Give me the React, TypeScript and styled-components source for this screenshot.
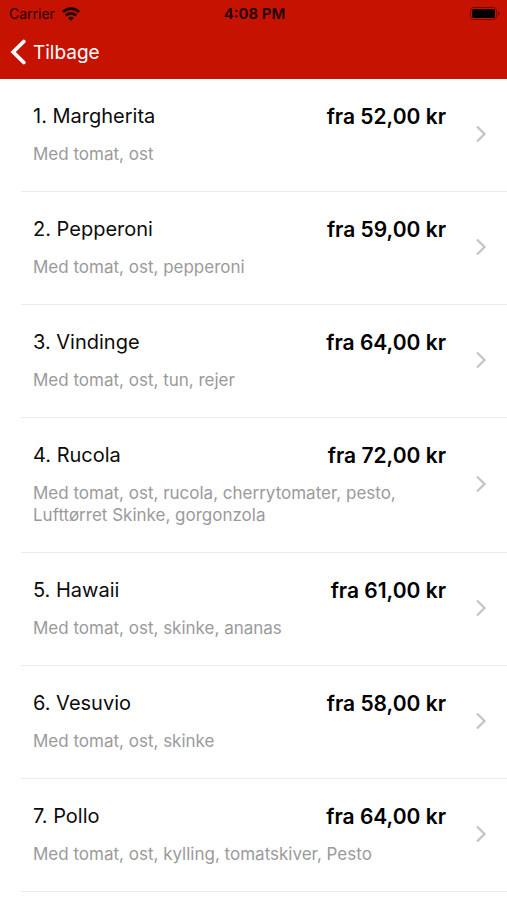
import React from "react";
import styled, { createGlobalStyle } from "styled-components";

const GlobalStyle = createGlobalStyle`
  * { box-sizing: border-box; }
  body { margin: 0; background: #fff; font-family: Inter, "Liberation Sans", sans-serif; color: #0c0c0c; }
`;

const Page = styled.main`
  min-height: 100vh;
  background: #fff;
`;

const Header = styled.header`
  background: #c61200;
  padding-bottom: 2px;
`;

const StatusBar = styled.div`
  display: grid;
  grid-template-columns: 1fr auto 1fr;
  align-items: center;
  height: 27px;
  padding: 0 7px 0 9px;
  font-size: 14px;
  color: #1c0200;
`;

const Carrier = styled.span`
  display: flex;
  align-items: center;
  gap: 7px;
`;

const Time = styled.time`
  font-size: 15px;
  font-weight: 600;
`;

const BatteryIcon = styled.svg`
  justify-self: end;
`;

const BackButton = styled.button`
  display: flex;
  align-items: center;
  gap: 7px;
  height: 50px;
  padding: 0 10px;
  border: 0;
  background: none;
  color: #fff;
  font: inherit;
  font-size: 19px;
  cursor: pointer;
`;

const MenuList = styled.ul`
  list-style: none;
  margin: 0;
  padding: 0 0 0 21px;
`;

const MenuItem = styled.li`
  border-bottom: 1px solid #ebebec;
`;

const ItemButton = styled.button`
  display: flex;
  align-items: center;
  width: 100%;
  padding: 23px 20px 26px 12px;
  border: 0;
  background: none;
  color: inherit;
  font: inherit;
  text-align: left;
  cursor: pointer;
`;

const ItemBody = styled.span`
  flex: 1;
  min-width: 0;
`;

const TitleRow = styled.span`
  display: flex;
  align-items: flex-start;
  justify-content: space-between;
`;

const Name = styled.span`
  font-size: 20px;
  line-height: 28px;
`;

const Price = styled.strong`
  font-size: 21px;
  font-weight: 600;
  line-height: 30px;
  color: #000;
`;

const Description = styled.span`
  display: block;
  margin-top: 11px;
  padding-right: 40px;
  font-size: 17px;
  line-height: 22px;
  color: #9a9a9c;
`;

const Chevron = styled.svg`
  flex: none;
  margin-left: 29px;
`;

const items = [
  { name: "1. Margherita", price: "fra 52,00 kr", description: "Med tomat, ost" },
  { name: "2. Pepperoni", price: "fra 59,00 kr", description: "Med tomat, ost, pepperoni" },
  { name: "3. Vindinge", price: "fra 64,00 kr", description: "Med tomat, ost, tun, rejer" },
  { name: "4. Rucola", price: "fra 72,00 kr", description: "Med tomat, ost, rucola, cherrytomater, pesto, Lufttørret Skinke, gorgonzola" },
  { name: "5. Hawaii", price: "fra 61,00 kr", description: "Med tomat, ost, skinke, ananas" },
  { name: "6. Vesuvio", price: "fra 58,00 kr", description: "Med tomat, ost, skinke" },
  { name: "7. Pollo", price: "fra 64,00 kr", description: "Med tomat, ost, kylling, tomatskiver, Pesto" },
];

export default function App() {
  return (
    <Page>
      <GlobalStyle />
      <Header>
        <StatusBar>
          <Carrier>
            Carrier
            <svg width="18" height="14" viewBox="0 0 18 14" fill="none" stroke="currentColor" strokeWidth="2.8" aria-hidden="true">
              <path d="M1 5C5.500.5 12.500.5 17 5M3.900 8.400c2.900-2.800 7.300-2.800 10.200 0" />
              <path d="M9 13.800 6.100 10.900c1.600-1.500 4.200-1.500 5.800 0z" fill="currentColor" stroke="none" />
            </svg>
          </Carrier>
          <Time>4:08 PM</Time>
          <BatteryIcon width="30" height="13" viewBox="0 0 30 13" aria-hidden="true">
            <rect x=".5" y=".5" width="26" height="12" rx="3" fill="none" stroke="#1c0200" strokeOpacity=".45" />
            <rect x="2" y="2" width="23" height="9" rx="1.500" fill="#000" />
            <path d="M28 4.500c2 .6 2 3.400 0 4z" fill="#1c0200" fillOpacity=".5" />
          </BatteryIcon>
        </StatusBar>
        <BackButton type="button">
          <svg width="16" height="26" viewBox="0 0 16 26" fill="none" stroke="currentColor" strokeWidth="3.8" strokeLinecap="round" aria-hidden="true">
            <path d="M13.800 2.500 3.200 13l10.600 10.500" />
          </svg>
          Tilbage
        </BackButton>
      </Header>
      <MenuList>
        {items.map((item) => (
          <MenuItem key={item.name}>
            <ItemButton type="button">
              <ItemBody>
                <TitleRow>
                  <Name>{item.name}</Name>
                  <Price>{item.price}</Price>
                </TitleRow>
                <Description>{item.description}</Description>
              </ItemBody>
              <Chevron width="12" height="18" viewBox="0 0 12 18" fill="none" stroke="#c5c5c8" strokeWidth="2.3" aria-hidden="true">
                <path d="m2 1.500 7.500 7.500L2 16.500" />
              </Chevron>
            </ItemButton>
          </MenuItem>
        ))}
      </MenuList>
    </Page>
  );
}
